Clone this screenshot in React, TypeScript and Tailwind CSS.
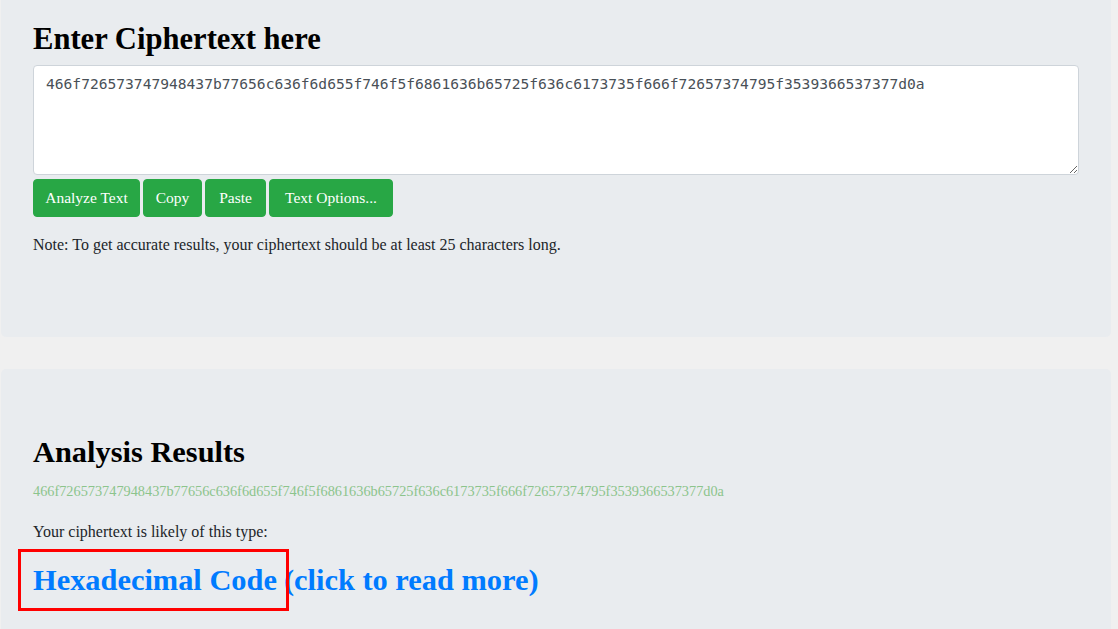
import React from "react";

const CIPHER =
  "466f726573747948437b77656c636f6d655f746f5f6861636b65725f636c6173735f666f72657374795f3539366537377d0a";

const serif = { fontFamily: '"Liberation Serif", "DejaVu Serif", serif' };

const buttons = [
  { label: "Analyze Text", w: "w-[107px]" },
  { label: "Copy", w: "w-[59px]" },
  { label: "Paste", w: "w-[61px]" },
  { label: "Text Options...", w: "w-[124px]" },
];

export default function App() {
  return (
    <div className="h-[629px] bg-[#f0f0f0] pl-[1px] pr-[7px] overflow-hidden" style={serif}>
      {/* Input panel */}
      <section className="bg-[#e9ecef] rounded-b-[5px] px-[32px] pt-[20px] pb-[64px] mb-[32px]">
        <h2 className="text-[30.6px] leading-[38px] font-bold text-black mb-[7px]">
          Enter Ciphertext here
        </h2>
        <textarea
          defaultValue={CIPHER}
          className="block w-full h-[110px] bg-white border border-[#ced4da] rounded-[4px] px-[12px] py-[6px] text-[14.6px] leading-[24px] text-[#495057] resize-y outline-none"
          style={{ fontFamily: '"DejaVu Sans Mono", "Liberation Mono", monospace' }}
        />
        <div className="flex gap-[3px] mt-[4px]">
          {buttons.map((b) => (
            <button
              key={b.label}
              className={`${b.w} bg-[#28a745] text-white text-[15.5px] leading-[24px] py-[6px] border border-[#28a745] rounded-[4px] text-center`}
            >
              {b.label}
            </button>
          ))}
        </div>
        <p className="mt-[16px] mb-[16px] text-[16px] leading-[24px] text-[#212529]">
          Note: To get accurate results, your ciphertext should be at least 25 characters long.
        </p>
      </section>

      {/* Results panel */}
      <section className="bg-[#e9ecef] rounded-t-[5px] px-[32px] pt-[64px] pb-[64px]">
        <h2 className="text-[30.4px] leading-[38px] font-bold text-black mb-[10px]">
          Analysis Results
        </h2>
        <p className="text-[14.3px] leading-[21px] text-[#8cc48c] mb-[18px]">{CIPHER}</p>
        <p className="text-[16px] leading-[24px] text-[#212529] mb-[12px]">
          Your ciphertext is likely of this type:
        </p>
        <div className="relative">
          <a href="#" className="text-[30.4px] leading-[48px] font-bold text-[#007bff]">
            Hexadecimal Code
          </a>{" "}
          <a href="#" className="ml-[3px] text-[30.4px] leading-[48px] font-bold text-[#007bff]">
            (click to read more)
          </a>
          <div className="absolute left-[-15px] top-[-7px] w-[271px] h-[62px] border-[3px] border-[#ff0000]" />
        </div>
      </section>
    </div>
  );
}
